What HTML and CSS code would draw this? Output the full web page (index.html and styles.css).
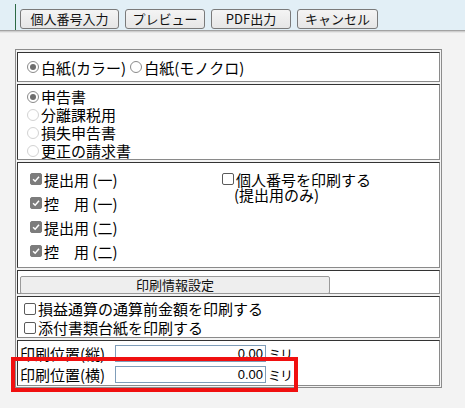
FILE: index.html
```html
<!DOCTYPE html>
<html lang="ja">
<head>
    <meta charset="UTF-8">
    <meta name="viewport" content="width=device-width, initial-scale=1.0">
    <title>印刷設定</title>
    <link rel="stylesheet" href="styles.css">
</head>
<body>
  <div class="toolbar">
    <div class="tools">
      <button class="tbtn b1">個人番号入力</button>
      <button class="tbtn b2">プレビュー</button>
      <button class="tbtn b3">PDF出力</button>
      <button class="tbtn b4">キャンセル</button>
    </div>
  </div>

  <div class="panel">
    <!-- 用紙 -->
    <div class="box paper">
      <label class="opt"><span class="radio on"></span>白紙(カラー)</label>
      <label class="opt"><span class="radio"></span>白紙(モノクロ)</label>
    </div>

    <!-- 帳票の種類 -->
    <div class="box kind">
      <label class="opt"><span class="radio on"></span>申告書</label>
      <label class="opt"><span class="radio off"></span>分離課税用</label>
      <label class="opt"><span class="radio off"></span>損失申告書</label>
      <label class="opt"><span class="radio off"></span>更正の請求書</label>
    </div>

    <!-- 部数 -->
    <div class="box copies">
      <div class="copy-list">
        <label class="chk"><span class="cbox on"><svg viewBox="0 0 12 12"><path d="M2.5 6.2 L5 8.6 L9.6 3.4" fill="none" stroke="#fff" stroke-width="1.8"/></svg></span>提出用 (一)</label>
        <label class="chk"><span class="cbox on"><svg viewBox="0 0 12 12"><path d="M2.5 6.2 L5 8.6 L9.6 3.4" fill="none" stroke="#fff" stroke-width="1.8"/></svg></span>控　用 (一)</label>
        <label class="chk"><span class="cbox on"><svg viewBox="0 0 12 12"><path d="M2.5 6.2 L5 8.6 L9.6 3.4" fill="none" stroke="#fff" stroke-width="1.8"/></svg></span>提出用 (二)</label>
        <label class="chk"><span class="cbox on"><svg viewBox="0 0 12 12"><path d="M2.5 6.2 L5 8.6 L9.6 3.4" fill="none" stroke="#fff" stroke-width="1.8"/></svg></span>控　用 (二)</label>
      </div>
      <div class="mynumber">
        <label class="chk"><span class="cbox"></span>個人番号を印刷する</label>
        <div class="note">(提出用のみ)</div>
      </div>
    </div>

    <div class="box setting">
      <button class="wide-btn">印刷情報設定</button>
    </div>

    <div class="box extras">
      <label class="chk"><span class="cbox"></span>損益通算の通算前金額を印刷する</label>
      <label class="chk"><span class="cbox"></span>添付書類台紙を印刷する</label>
    </div>

    <div class="box position">
      <div class="pos-row">
        <span class="pos-label">印刷位置(縦)</span>
        <input class="pos-input" type="text" value="0.00">
        <span class="unit">ミリ</span>
      </div>
      <div class="pos-row">
        <span class="pos-label">印刷位置(横)</span>
        <input class="pos-input" type="text" value="0.00">
        <span class="unit">ミリ</span>
      </div>
    </div>
  </div>

  <div class="highlight"></div>
</body>
</html>
```

FILE: styles.css
```css
body {
    margin: 0;
    background-color: #f3f3f3;
    font-family: 'Noto Sans CJK JP', 'Liberation Sans', sans-serif;
    font-size: 15px;
    color: #000;
    position: relative;
    height: 408px;
    overflow: hidden;
}

/* ツールバー */
.toolbar {
    height: 30px;
    background-color: #e2eff6;
    border-bottom: 1px solid #a3a3a3;
    box-shadow: 0 1px 0 #cfcfcf, 0 2px 0 #e6e6e6;
}

.tools {
    margin-left: 15px;
    position: relative;
    top: 4px;
    height: 26px;
    border-left: 1px solid #2c6a45;
    padding: 5px 0 0 4px;
    box-sizing: border-box;
    display: flex;
    gap: 6px;
}

.tbtn {
    height: 20px;
    padding: 0;
    font-family: inherit;
    font-size: 13px;
    line-height: 18px;
    color: #111;
    background: linear-gradient(#f4f4f4, #e6e6e6);
    border: 1px solid #7a7a7a;
    border-radius: 3px;
}
.b1 { width: 99px; }
.b2 { width: 80px; }
.b3 { width: 80px; }
.b4 { width: 81px; }

/* パネル */
.panel {
    margin: 18px 0 0 15px;
    width: 427px;
    box-sizing: border-box;
    border: 1px solid #8c8c8c;
    padding: 2px 1px 1px 1px;
    display: flex;
    flex-direction: column;
    gap: 2px;
}

.box {
    background-color: #fff;
    border: 1px solid;
    border-color: #333 #8a8a8a #8a8a8a #333;
    box-sizing: border-box;
}

.opt, .chk {
    display: flex;
    align-items: center;
    white-space: nowrap;
}

.radio {
    width: 12px;
    height: 12px;
    border: 1px solid #8a8a8a;
    border-radius: 50%;
    box-sizing: border-box;
    background: #fff;
    margin-right: 2px;
    position: relative;
    flex-shrink: 0;
}
.radio.on::after {
    content: '';
    position: absolute;
    left: 2px;
    top: 2px;
    width: 6px;
    height: 6px;
    border-radius: 50%;
    background: #6e6e6e;
}
.radio.off { border-color: #d2d2d2; }

.cbox {
    width: 12px;
    height: 12px;
    border: 1px solid #5a5a5a;
    border-radius: 2px;
    box-sizing: border-box;
    margin-right: 2px;
    flex-shrink: 0;
    display: flex;
}
.cbox.on {
    background: #7c7c7c;
    border-color: #7c7c7c;
}
.cbox svg { width: 10px; height: 10px; }

.paper {
    height: 30px;
    padding-left: 9px;
    display: flex;
    align-items: center;
    gap: 4px;
}

.kind {
    height: 76px;
    padding: 3px 0 0 9px;
    line-height: 18px;
}
.kind .opt { height: 18px; }

.copies {
    height: 106px;
    padding: 4px 0 0 12px;
    display: flex;
}
.copy-list {
    width: 192px;
}
.copy-list .chk { height: 24px; }
.mynumber { line-height: 15px; padding-top: 4px; }
.mynumber .chk { height: 16px; }
.mynumber .note { padding-left: 12px; }

.setting {
    height: 24px;
    padding: 2px;
}
.wide-btn {
    width: 310px;
    height: 18px;
    padding: 0;
    font-family: inherit;
    font-size: 13px;
    line-height: 16px;
    background: #eeeeee;
    border: 1px solid #9a9a9a;
    border-radius: 2px;
    color: #111;
}

.extras {
    height: 42px;
    padding: 2px 0 0 6px;
    line-height: 18px;
}
.extras .chk { height: 19px; }

.position {
    height: 46px;
    padding: 3px 0 0 2px;
    display: flex;
    flex-direction: column;
    gap: 3px;
}
.pos-row {
    display: flex;
    align-items: center;
    height: 18px;
}
.pos-label { width: 95px; }
.pos-input {
    width: 151px;
    height: 17px;
    box-sizing: border-box;
    border: 1px solid #7f9db9;
    padding: 0 2px;
    font-family: 'Liberation Sans', sans-serif;
    font-size: 13px;
    text-align: right;
    color: #000;
}
.unit {
    margin-left: 2px;
    font-size: 13px;
    letter-spacing: -1px;
}

/* 注目枠 */
.highlight {
    position: absolute;
    left: 11px;
    top: 357px;
    width: 287px;
    height: 35px;
    border: 4px solid #f01010;
    box-sizing: border-box;
}
```
